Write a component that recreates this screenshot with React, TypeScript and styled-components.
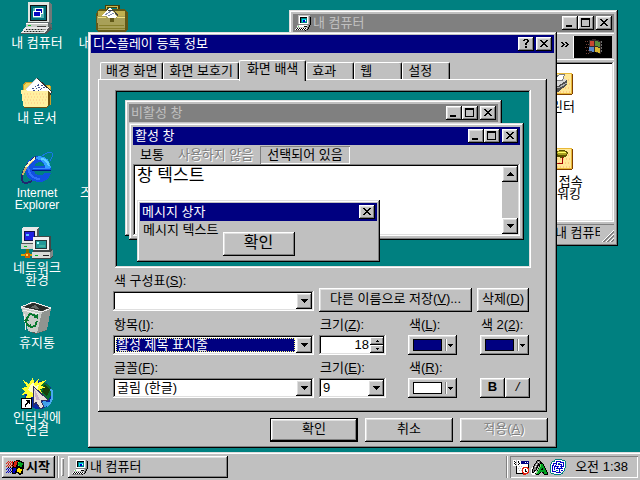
import React from "react";
import styled, { createGlobalStyle, css } from "styled-components";

const FACE = "#c0c0c0";
const NAVY = "#000080";
const TEAL = "#008080";
const GRAY = "#808080";
const LIGHT = "#dfdfdf";

const GlobalStyle = createGlobalStyle`
  *, *::before, *::after { box-sizing: border-box; }
  html, body { margin: 0; height: 100%; overflow: hidden; }
  body, button, input, select {
    font: 13px/14px "Liberation Sans", "Noto Sans CJK KR", sans-serif;
    color: #000;
  }
  svg { display: block; flex: none; shape-rendering: crispEdges; }
`;

const raised = css`
  box-shadow: inset -1px -1px #000, inset 1px 1px #fff,
    inset -2px -2px ${GRAY}, inset 2px 2px ${LIGHT};
`;
const frame = css`
  box-shadow: inset -1px -1px #000, inset 1px 1px ${LIGHT},
    inset -2px -2px ${GRAY}, inset 2px 2px #fff;
`;
const sunken = css`
  box-shadow: inset -1px -1px #fff, inset 1px 1px ${GRAY},
    inset -2px -2px ${LIGHT}, inset 2px 2px #000;
`;

/* ---------- Drawings ---------- */

const PALETTE: Record<string, string> = {
  k: "#000", w: "#fff", g: GRAY, s: FACE, b: "#0000c8", n: NAVY, r: "#e02010",
  t: TEAL, c: "#00d8f0", y: "#ffe000", e: "#00a020", l: "#60e060", d: "#404040",
};

function Pixels({ rows }: { rows: string[] }) {
  const w = Math.max(...rows.map((r) => r.length));
  return (
    <svg width={w} height={rows.length} viewBox={`0 0 ${w} ${rows.length}`} aria-hidden="true">
      {rows.flatMap((row, y) =>
        [...row].map((ch, x) =>
          PALETTE[ch] ? <rect key={`${x}-${y}`} x={x} y={y} width="1" height="1" fill={PALETTE[ch]} /> : null,
        ),
      )}
    </svg>
  );
}

const GLYPHS = {
  min: ["        ", "        ", "        ", "        ", "        ", "        ", "        ", "kkkkkk  ", "kkkkkk  "],
  max: ["kkkkkkkkk", "kkkkkkkkk", "k       k", "k       k", "k       k", "k       k", "k       k", "k       k", "kkkkkkkkk"],
  close: ["kk    kk", " kk  kk ", "  kkkk  ", "   kk   ", "  kkkk  ", " kk  kk ", "kk    kk", "        "],
  help: [" kkkk ", "kk  kk", "    kk", "   kk ", "  kk  ", "  kk  ", "      ", "  kk  ", "  kk  "],
  down: ["kkkkkkk", " kkkkk ", "  kkk  ", "   k   "],
  up: ["   k   ", "  kkk  ", " kkkkk ", "kkkkkkk"],
  downSmall: ["kkkkk", " kkk ", "  k  "],
  downTiny: ["kkk", " k "],
  upTiny: [" k ", "kkk"],
  more: ["kk  kk  ", " kk  kk ", "  kk  kk", " kk  kk ", "kk  kk  "],
};

const PC_SMALL = [
  "   ssssssssssss ",
  "   swwwwwwwwwsg ",
  "   swkkkkkkkwsgk",
  "   swkttttttwsgk",
  "   swktcccctwsgk",
  "   swktcbbwtwsgk",
  "   swktcbbctwsgk",
  "   swkttttttwsgk",
  "   swwwwwwwwwsgk",
  "    gggggggggggk",
  "  sswwwwwwwwsgk ",
  "  wlwwwwwkkksgk ",
  "  ssssssssssgk  ",
  " wkwkwkwkwkwgk  ",
  "wkwkwkwkwkwgk   ",
  "ggggggggggk     ",
];

const FLAG = [
  "          kkkk    ",
  "  r r r krrrkkkk  ",
  " r r rrkrrrkleekkk",
  "r r r rkrrrkeeeeek",
  "  r r rkrrrkeeeeek",
  " r r rkrrrkkleeekk",
  "r r r rkrrkkkkeekk",
  "  k k kkkkkkkkkkkk",
  " b b bkbbbkkyykkkk",
  "b b b kbbbkyyyyyk ",
  "  b b kbbbkyyyyyk ",
  " b b kbbbkkyyyykk ",
  "b b b kbbkkkkyykk ",
  "      kkkk  kkkkk ",
  "             kk   ",
];

const TRAY_CALENDAR = [
  "www www         ",
  "wkw wkwwnnnnnnnn",
  "wwk wkwwnnnnwnwn",
  "wkw wwkwnnnnnnnn",
  "wwk wkwwwwwwwwwk",
  "www wwwwwwwwwwwk",
  "   kwwswswwwwwwk",
  "   kwwwwwwrrrrrk",
  "   kwswswrrwwwrr",
  "   kwwwwwrwwkwwr",
  "   kwwswsrwwkwwr",
  "   kwwwwwrwwkkwr",
  "   kwwwwwrrwwwrr",
  "   kkkkkkkrrrrr ",
  "          rrr   ",
];
const TRAY_A = [
  "      kkk        ",
  "     kgggk       ",
  "     kgwgkk      ",
  "    kggkgkkk     ",
  "   kgwgkkleek    ",
  "   kggkkkleek    ",
  "  kgwgk kleeek   ",
  " wkggkk leeeek   ",
  "wwkggk kleekeek  ",
  "wkgggk leekkeek  ",
  "wkgkk kleeeeeeek ",
  "wkgkw leeeeeeeek ",
  "wkkww leek kkeeek",
  "wwwwkleek   keeek",
  " www kkk     kkkk",
];
const TRAY_NET = [
  "     ttttttt    ",
  "    twwwwwwwttt ",
  "  tttwbbbbbwwwwt",
  " twwwwbwwwbbbbwt",
  " twbbbbwttwwwbwt",
  "twwbwwbwbbbbwbwt",
  "twbbwbwwwwwbwbwt",
  "twbwbbbbbwbbbbwt",
  "twbwbwwbwwwbwwwt",
  "twbwbwbbbbbbbwt ",
  "twbwbwwwwbwwwwt ",
  "twbwwwttwbwbbwt ",
  "twbbbbwwwbwwwt  ",
  "twwwwwbbbbbwt   ",
  " tttwwwwwwwtt   ",
  "    ttttttt     ",
];

function ComputerIcon() {
  return (
    <svg width="32" height="32" viewBox="0 0 32 32" aria-hidden="true">
      <path d="M8 0h20l3 2v19l-3 2H7z" fill="#707878" />
      <path d="M7 0h20l1 1v20H7z" fill="#e0e4e0" />
      <path d="M9 3h17v16H9z" fill="#101010" />
      <path d="M10 4h15v14H10z" fill="#006e78" />
      <path d="M12 6h11v10H12z" fill="#58b4b4" />
      <path d="M14 6h8v6h-8z" fill="#fff" /><path d="M15 7h6v4h-6z" fill="#0000b0" />
      <path d="M12 9h8v6h-8z" fill="#fff" /><path d="M13 10h6v4h-6z" fill="#0808c0" />
      <path d="M6 20h22l3 2v6H6z" fill="#606868" />
      <path d="M5 21h22v6H5z" fill="#c8ccc8" />
      <path d="M5 21h22v1H5z" fill="#fff" />
      <path d="M7 23h3v1H7z" fill="#00c020" /><path d="M16 24h9v1h-9z" fill="#404040" />
      <path d="M4 25h24l3 1-5 6H0z" fill="#505858" />
      <path d="M4 25h24l-4 6H0z" fill="#e8e8e8" />
      <path d="M5 27h20v1H5zM3 29h20v1H3z" fill="#909890" />
      <path d="M5 27h1v1H5zM8 27h1v1H8zM11 27h1v1h-1zM14 27h1v1h-1zM17 27h1v1h-1zM20 27h1v1h-1zM3 29h1v1H3zM6 29h1v1H6zM9 29h1v1H9zM12 29h1v1h-1zM15 29h1v1h-1zM18 29h1v1h-1z" fill="#202020" />
    </svg>
  );
}

function DocumentsIcon() {
  return (
    <svg width="32" height="32" viewBox="0 0 32 32" aria-hidden="true">
      <path d="M2 8l2-3h8l2 3h14l2 2v18H2z" fill="#c8a028" />
      <path d="M3 8l2-2h6l2 3h16v8H3z" fill="#f0d860" />
      <path d="M16 1L31 15 20 28 5 12z" fill="#fff" />
      <path d="M16 1L31 15l-3 4" fill="none" stroke="#303030" />
      <path d="M16 1L5 12" stroke="#d0d0d0" fill="none" />
      <path d="M11 12l8-5M12 14l10-6M14 15l10-5" stroke="#405090" strokeDasharray="2 1" />
      <path d="M0 13h5l2 1h20v15l-2 1H3l-1-2z" fill="#fff0a0" />
      <path d="M3 17h22M4 20h22M3 23h22M4 26h20" stroke="#ffd890" strokeDasharray="1 2" strokeWidth="2" />
      <path d="M27 14l2 2v12l-4 3H3v-1h22l2-2z" fill="#705010" />
    </svg>
  );
}

function ExplorerIcon() {
  return (
    <svg width="32" height="32" viewBox="0 0 32 32" aria-hidden="true">
      <path d="M17 4c8 0 13 5 13 14H13c0 4 3 5 6 5 3 0 4-1 5-2h6c-2 6-6 9-12 9-8 0-14-5-14-12S9 4 17 4z" fill="#1050e0" />
      <path d="M15 5c8-3 14 2 15 11h-6c0-5-3-8-9-9z" fill="#30a0ff" />
      <path d="M20 7c4 0 7 3 8 7" fill="none" stroke="#60d0ff" strokeWidth="2" />
      <path d="M14 14h9c0-3-2-4-4-4s-5 1-5 4z" fill={TEAL} />
      <path d="M11 18h19v1H11z" fill="#001880" />
      <path d="M12 16h17v1H12z" fill="#3888ff" />
      <path d="M7 14c0 7 4 13 12 13" fill="none" stroke="#3070f8" strokeWidth="2" />
      <path d="M20 5c5-5 10-5 11-4 1 2 0 5-2 8" fill="none" stroke="#1878e8" strokeWidth="1" />
      <path d="M15 5C6 10-2 24 2 30c2 2 5 1 9-1" fill="none" stroke="#202870" strokeWidth="2" />
      <path d="M13 7C7 12 3 17 2 23" fill="none" stroke="#c8b068" strokeWidth="2" />
      <path d="M14 6c-4 3-7 6-9 9" fill="none" stroke="#fff8c0" strokeWidth="2" />
    </svg>
  );
}

function NetworkIcon() {
  return (
    <svg width="32" height="32" viewBox="0 0 32 32" aria-hidden="true">
      <path d="M1 1h17v21H0v-6h1z" fill="#505858" />
      <path d="M1 1l2-1h15l-2 2v14H1z" fill="#e8e8e8" />
      <path d="M3 4h11v10H3z" fill="#101048" /><path d="M4 5h9v8H4z" fill="#2020e0" />
      <path d="M5 7h3v2H5z" fill="#60c0ff" />
      <path d="M0 17h16v5H0z" fill="#d0d4d0" /><path d="M3 19h3v1H3z" fill="#00c020" />
      <path d="M5 22h3v5H5z" fill="#807000" /><path d="M0 28h12" stroke="#e0a000" strokeWidth="2" />
      <path d="M4 26h5v5H4z" fill="#d06000" /><path d="M5 27h2v2H5z" fill="#ffe040" />
      <path d="M12 10l3-1h15v13l2 2v6l-3 2H11v-7h1z" fill="#404848" />
      <path d="M12 10h16v13H12z" fill="#f0f0f0" />
      <path d="M14 13h12v9H14z" fill="#203838" /><path d="M15 14h10v7H15z" fill="#209898" />
      <path d="M16 15h2v2h-2z" fill="#a0ffff" /><path d="M18 18h6v2h-6z" fill="#40b0a0" />
      <path d="M11 25h18v6H11z" fill="#d8dcd8" /><path d="M14 28h3v1h-3z" fill="#00b020" />
      <path d="M22 28h6v1h-6z" fill="#202020" />
      <path d="M29 25l3-2v6l-3 2z" fill="#808888" />
    </svg>
  );
}

function RecycleIcon() {
  return (
    <svg width="32" height="32" viewBox="0 0 32 32" aria-hidden="true">
      <path d="M0 5l12-5 18 6-4 22-11 4-8-3z" fill="#585c58" />
      <path d="M0 5l21 5-5 21-9-2z" fill="#c8ccc8" />
      <path d="M21 10l9-4-4 22-10 3z" fill="#909490" />
      <path d="M3 5l9-4 16 5-7 3z" fill="#282c28" />
      <path d="M9 6l5-3 4 4z" fill="#686c68" />
      <path d="M0 5l12-5 18 6-9 4z" fill="none" stroke="#f0f0f0" />
      <path d="M2 8l16 4M5 28L3 12" fill="none" stroke="#f0f0f0" />
      <path d="M6 16l3-4 4 1 2 3M5 18l1 5 3 1M16 19l-2 5-4 1" fill="none" stroke="#087830" strokeWidth="2" />
      <path d="M12 15l5 2 0-5zM3 19l3-4 2 4zM10 22v5l-3-3z" fill="#087830" />
    </svg>
  );
}

function ConnectIcon() {
  return (
    <svg width="32" height="32" viewBox="0 0 32 32" aria-hidden="true">
      <circle cx="18" cy="18" r="14" fill="#0828a8" />
      <path d="M20 4c7 2 11 6 11 12l-4 8-5-5-3-6z" fill="#087030" />
      <path d="M24 7l5 6-3 6-5-4z" fill="#18400c" />
      <path d="M30 12c3 6 1 13-4 17" fill="none" stroke="#48a8f0" strokeWidth="2" />
      <path d="M22 24l6 1-3 5-6 1z" fill="#40a0e8" />
      <path d="M12 0l1 6 5-5-1 5 8-3-6 6 6 1-6 2 3 6-6-2-1 8-4-5-7 7 2-9-6 1 4-4-4-3 6-1-4-7 6 4z" fill="#ffff30" />
      <path d="M12 5l2 4 4-1-2 5-4 3-5-3 2-4z" fill="#ffffc8" />
      <path d="M12 9l15 14-7 1 3 6-4 2-4-7-3 5z" fill="#e8e0d8" stroke="#303060" />
      <path d="M13 11l2 12 4 0z" fill="#c8b0c8" />
      <path d="M0 21h11v11H0z" fill="#000" /><path d="M1 22h9v9H1z" fill="#fff" />
      <path d="M4 23h5v5l-2-2-2 2v2H4v-3l2-2z" fill="#000" />
    </svg>
  );
}

function BriefcaseIcon() {
  return (
    <svg width="32" height="32" viewBox="0 0 32 32" aria-hidden="true">
      <path d="M10 8V4h12v4" fill="none" stroke="#484008" strokeWidth="3" />
      <path d="M10 7V4h11v3" fill="none" stroke="#c8b850" />
      <path d="M1 9l3-2h25l3 4v17l-3 2H2l-2-3V13z" fill="#605818" />
      <path d="M2 9h27v7H2z" fill="#c0b050" />
      <path d="M4 16L14 5l8 11z" fill="#fff" /><path d="M12 9l5-1 7 8" fill="none" stroke="#404040" />
      <path d="M9 13l6-4M12 14l6-3" stroke="#8090b0" />
      <path d="M1 14h9l3 2h6l2-2h8v14H2z" fill="#a8a058" />
      <path d="M2 15h8M21 15h8" stroke="#f0e080" />
      <path d="M14 16h4v4h-4z" fill="#605818" />
      <path d="M3 23h25M2 26h27" stroke="#88802c" />
    </svg>
  );
}

function FolderBase({ children }: { children: React.ReactNode }) {
  return (
    <svg width="32" height="32" viewBox="0 0 32 32" aria-hidden="true">
      <path d="M1 7l3-3h9l2 3h15l2 2v19l-2 1H2z" fill="#804000" />
      <path d="M1 7l3-2h8l2 2h16v20H1z" fill="#ffe898" />
      <path d="M3 14h26M4 18h25M3 22h26M4 26h25" stroke="#ffc880" strokeDasharray="1 2" strokeWidth="2" />
      <path d="M15 7h15v20H1" fill="none" stroke="#e8b838" />
      {children}
    </svg>
  );
}

function PrintersIcon() {
  return (
    <FolderBase>
      <path d="M8 15l8-5 10 4v5l-9 7-9-5z" fill="#505050" />
      <path d="M8 15l8-5 10 4-9 6z" fill="#d8d8d8" />
      <path d="M12 14l7-6h5l-3 7z" fill="#fff" stroke="#808080" />
      <path d="M8 17l9 5 9-5" fill="none" stroke="#b0b0b0" />
    </FolderBase>
  );
}

function DialUpIcon() {
  return (
    <FolderBase>
      <path d="M14 12c2-4 12-4 13 0l-2 4-4 1-5-1z" fill="#585000" />
      <path d="M15 12c2-3 10-3 11 0l-2 2h-7z" fill="#a8a020" />
      <path d="M17 12c2-1 6-1 8 0" fill="none" stroke="#ffff60" />
      <path d="M21 16v6h-7" fill="none" stroke="#a00000" />
      <path d="M3 21h13v3H3" fill="none" stroke="#c02010" strokeDasharray="1 1" />
    </FolderBase>
  );
}

function Throbber() {
  return (
    <svg width="38" height="22" viewBox="0 0 38 22" aria-hidden="true">
      <path d="M0 0h38v22H0z" fill="#000" />
      <path d="M11 5h5M12 8h4M11 11h4M12 14h4M12 17h3" stroke="#704038" strokeDasharray="1 1" />
      <path d="M15 4l5-1 7 2v13l-7-2-5 1z" fill="#302828" />
      <path d="M16 5h4v5h-4z" fill="#c84830" /><path d="M21 5l5 1v5l-5-1z" fill="#58903c" />
      <path d="M15 11h5v5l-5-1z" fill="#5888c8" /><path d="M21 11l5 1v5l-5-1z" fill="#d8b830" />
      <path d="M27 5v12" stroke="#707070" strokeDasharray="2 1" />
    </svg>
  );
}

function Grip() {
  return (
    <svg width="12" height="12" viewBox="0 0 12 12" aria-hidden="true">
      <path d="M0 12L12 0M4 12l8-8M8 12l4-4" stroke="#fff" />
      <path d="M1 12L12 1M2 12L12 2M5 12l7-7M6 12l6-6M9 12l3-3M10 12l2-2" stroke={GRAY} />
    </svg>
  );
}

/* ---------- Window parts ---------- */

const Win = styled.section<{ $pad: number }>`
  display: flex;
  flex-direction: column;
  padding: ${(p) => p.$pad}px;
  background: ${FACE};
  ${frame}
`;

const TitleRow = styled.header<{ $active?: boolean }>`
  display: flex;
  align-items: center;
  flex: none;
  height: 18px;
  padding: 0 2px;
  gap: 2px;
  white-space: nowrap;
  background: ${(p) => (p.$active ? NAVY : GRAY)};
  color: ${(p) => (p.$active ? "#fff" : FACE)};
`;

const TitleText = styled.h2`
  flex: 1;
  margin: 0;
  font: inherit;
`;

const CaptionGroup = styled.span`
  display: flex;
`;

const CaptionButton = styled.button`
  display: flex;
  align-items: center;
  justify-content: center;
  width: 16px;
  height: 14px;
  padding: 0 1px 1px 0;
  border: 0;
  background: ${FACE};
  ${raised}
`;

function Caption({ title, active, icon, kind }: {
  title: string; active?: boolean; icon?: React.ReactNode; kind: "full" | "help" | "close";
}) {
  return (
    <TitleRow $active={active}>
      {icon}
      <TitleText>{title}</TitleText>
      {kind === "full" && (
        <CaptionGroup>
          <CaptionButton type="button" aria-label="최소화"><Pixels rows={GLYPHS.min} /></CaptionButton>
          <CaptionButton type="button" aria-label="최대화"><Pixels rows={GLYPHS.max} /></CaptionButton>
        </CaptionGroup>
      )}
      {kind === "help" && <CaptionButton type="button" aria-label="도움말"><Pixels rows={GLYPHS.help} /></CaptionButton>}
      <CaptionButton type="button" aria-label="닫기"><Pixels rows={GLYPHS.close} /></CaptionButton>
    </TitleRow>
  );
}

/* ---------- Desktop ---------- */

const Screen = styled.div`
  display: flex;
  flex-direction: column;
  height: 100vh;
  background: ${TEAL};
  overflow: hidden;
`;

const Desktop = styled.main`
  position: relative;
  flex: 1;
  min-height: 0;
`;

const IconGrid = styled.div`
  display: grid;
  grid-auto-flow: column;
  grid-template-rows: repeat(6, 75px);
  grid-auto-columns: 74px;
  column-gap: 1px;
  justify-content: start;
  padding-top: 2px;
`;

const IconCell = styled.a<{ $dark?: boolean }>`
  display: flex;
  flex-direction: column;
  align-items: center;
  gap: 3px;
  width: 74px;
  height: 75px;
  color: ${(p) => (p.$dark ? "#000" : "#fff")};
  font-size: 13px;
  line-height: 12px;
  text-align: center;
  text-decoration: none;
  white-space: pre-line;
`;

const LatinLabel = styled.span`
  font-size: 12px;
`;

const EdgeLabel = styled.span`
  width: 64px;
  padding-top: 35px;
  text-align: left;
`;

const ComputerWindow = styled(Win)`
  position: absolute;
  left: 289px;
  top: 10px;
  width: 329px;
`;

const ToolBar = styled.div`
  display: flex;
  align-items: center;
  justify-content: flex-end;
  height: 27px;
  margin: 1px 0 2px;
  padding-right: 2px;
  border-top: 1px solid #fff;
  border-bottom: 1px solid #fff;
`;

const MoreButton = styled.button`
  display: flex;
  padding: 0 4px 5px;
  border: 0;
  background: none;
`;

const LogoCell = styled.span`
  border-left: 1px solid #fff;
`;

const FilePane = styled.div`
  display: flex;
  flex-direction: column;
  align-items: flex-end;
  height: 160px;
  padding: 4px 20px 0 2px;
  background: #fff;
  ${sunken}
`;

const StatusBar = styled.div`
  display: flex;
  justify-content: flex-end;
  align-items: flex-end;
  height: 20px;
  padding-top: 2px;
`;

const StatusCell = styled.span`
  align-self: stretch;
  width: 46px;
  padding-left: 1px;
  overflow: hidden;
  white-space: nowrap;
  line-height: 16px;
  border-top: 1px solid ${GRAY};
`;

const GripCell = styled.span`
  display: flex;
  align-items: flex-end;
  justify-content: flex-end;
  align-self: stretch;
  width: 14px;
  border-top: 1px solid ${GRAY};
`;

/* ---------- Display properties ---------- */

const Dialog = styled(Win)`
  position: absolute;
  left: 88px;
  top: 32px;
  width: 469px;
`;

const DialogBody = styled.form`
  padding: 7px 6px 3px 7px;
`;

const TabList = styled.div`
  display: flex;
  align-items: flex-end;
  padding-left: 2px;
`;

const Tab = styled.button<{ $selected?: boolean }>`
  position: relative;
  height: ${(p) => (p.$selected ? 21 : 17)}px;
  min-width: 48px;
  margin-bottom: ${(p) => (p.$selected ? -2 : 0)}px;
  padding: 0 ${(p) => (p.$selected ? 7 : 5)}px ${(p) => (p.$selected ? 4 : 0)}px;
  z-index: ${(p) => (p.$selected ? 1 : 0)};
  border: 1px solid #fff;
  border-right-color: #000;
  border-bottom: 0;
  border-radius: 2px 2px 0 0;
  background: ${FACE};
  box-shadow: inset -1px 0 ${GRAY};
  text-align: left;
  white-space: nowrap;
`;

const TabPanel = styled.div`
  margin-right: 1px;
  padding: 11px 14px 14px 15px;
  box-shadow: inset -1px -1px #000, inset 1px 1px #fff, inset -2px -2px ${GRAY};
`;

const Preview = styled.div`
  position: relative;
  height: 178px;
  margin: 0 2px;
  background: ${TEAL};
  ${sunken}
`;

const InactiveSample = styled(Win)`
  position: absolute;
  left: 10px;
  top: 10px;
  width: 377px;
  height: 136px;
`;

const ActiveSample = styled(Win)`
  position: absolute;
  left: 14px;
  top: 33px;
  width: 395px;
`;

const MessageSample = styled(Win)`
  position: absolute;
  left: 22px;
  top: 110px;
  width: 243px;
  height: 62px;
`;

const MenuRow = styled.div`
  display: flex;
  align-items: center;
  height: 19px;
  white-space: nowrap;
`;

const MenuItem = styled.button<{ $off?: boolean; $on?: boolean }>`
  height: 18px;
  padding: 0 7px;
  border: 0;
  background: none;
  color: ${(p) => (p.$off ? GRAY : "#000")};
  text-shadow: ${(p) => (p.$off ? "1px 1px #fff" : "none")};
  box-shadow: ${(p) => (p.$on ? `inset 1px 1px ${GRAY}, inset -1px -1px #fff` : "none")};
`;

const TextPane = styled.div`
  display: flex;
  justify-content: space-between;
  height: 72px;
  padding: 2px;
  background: #fff;
  ${sunken}
`;

const PaneText = styled.p`
  margin: 0;
  padding: 0 2px;
  font-size: 17px;
  line-height: 20px;
`;

const ScrollBar = styled.div`
  display: flex;
  flex-direction: column;
  justify-content: space-between;
  width: 16px;
  background: ${FACE};
`;

const ArrowButton = styled.button`
  display: flex;
  align-items: center;
  justify-content: center;
  width: 16px;
  height: 16px;
  padding: 0;
  border: 0;
  background: ${FACE};
  ${raised}
`;

const MessageText = styled.p`
  margin: 0;
  padding: 0 3px;
  line-height: 17px;
`;

const PushButton = styled.button<{ $default?: boolean; $pad?: number }>`
  height: 24px;
  padding: 0 ${(p) => p.$pad ?? 8}px 2px;
  border: ${(p) => (p.$default ? "1px solid #000" : "0")};
  background: ${FACE};
  white-space: nowrap;
  ${raised}

  &:disabled { color: ${GRAY}; text-shadow: 1px 1px #fff; }
`;

const SampleButton = styled(PushButton)`
  align-self: center;
  width: 72px;
  margin-top: -6px;
  font-size: 16px;
`;

const FormRow = styled.div`
  display: flex;
  align-items: flex-end;
  height: 37px;
  margin-top: 6px;
`;

const SchemeRow = styled(FormRow)`
  height: 38px;
  gap: 5px;
`;

const Field = styled.div<{ $w: number; $gap?: number }>`
  display: flex;
  flex-direction: column;
  align-self: flex-start;
  gap: 3px;
  width: ${(p) => p.$w}px;
  margin-right: ${(p) => p.$gap ?? 0}px;
`;

const Label = styled.label`
  height: 14px;
  padding-left: 1px;
  white-space: nowrap;
`;

const ComboBox = styled.div<{ $focus?: boolean }>`
  display: grid;
  grid-template-columns: 1fr 16px;
  height: 20px;
  padding: 2px;
  background: #fff;
  ${sunken}

  &::before {
    content: "";
    grid-area: 1 / 1;
    margin: 1px;
    z-index: 1;
    pointer-events: none;
    border: ${(p) => (p.$focus ? "1px dotted #ffff80" : "0")};
  }
`;

const Select = styled.select<{ $focus?: boolean }>`
  grid-area: 1 / 1 / 2 / 3;
  appearance: none;
  height: 16px;
  padding: 0 1px;
  border: 1px solid transparent;
  border-right-width: 17px;
  border-radius: 0;
  outline: 0;
  background: ${(p) => (p.$focus ? NAVY : "transparent")};
  background-clip: padding-box;
  color: ${(p) => (p.$focus ? "#fff" : "#000")};
`;

const ComboArrow = styled.span`
  grid-area: 1 / 2;
  display: flex;
  align-items: center;
  justify-content: center;
  background: ${FACE};
  pointer-events: none;
  ${raised}
`;

function Combo({ id, value, focus }: { id: string; value: string; focus?: boolean }) {
  return (
    <ComboBox $focus={focus}>
      <Select id={id} $focus={focus} defaultValue={value}>
        <option value={value}>{value}</option>
      </Select>
      <ComboArrow><Pixels rows={GLYPHS.down} /></ComboArrow>
    </ComboBox>
  );
}

const Spinner = styled.div`
  display: flex;
  height: 20px;
  padding: 2px;
  background: #fff;
  ${sunken}
`;

const SpinInput = styled.input`
  flex: 1;
  min-width: 0;
  padding: 0 1px;
  border: 0;
  outline: 0;
  background: transparent;
  text-align: right;
`;

const SpinButtons = styled.div`
  display: grid;
  grid-template-rows: 1fr 1fr;
  width: 14px;
`;

const SpinButton = styled.button`
  display: flex;
  align-items: center;
  justify-content: center;
  padding: 0;
  border: 0;
  background: ${FACE};
  box-shadow: inset -1px -1px #000, inset 1px 1px #fff, inset -2px -2px ${GRAY};
`;

const ColorButton = styled.button`
  display: flex;
  align-items: center;
  height: 20px;
  width: 49px;
  padding: 0 4px 0 5px;
  gap: 3px;
  border: 0;
  background: ${FACE};
  ${raised}
`;

const Swatch = styled.span<{ $color: string }>`
  width: 29px;
  height: 12px;
  border: 1px solid #000;
  background: ${(p) => p.$color};
`;

const SwatchArrow = styled.span`
  display: flex;
  align-items: center;
  height: 12px;
  padding-left: 2px;
  border-left: 1px solid ${GRAY};
  box-shadow: inset 1px 0 #fff;
`;

function ColorField({ id, label, color, gap }: { id: string; label: React.ReactNode; color: string; gap?: number }) {
  return (
    <Field $w={49} $gap={gap}>
      <Label htmlFor={id}>{label}</Label>
      <ColorButton id={id} type="button">
        <Swatch $color={color} />
        <SwatchArrow><Pixels rows={GLYPHS.downSmall} /></SwatchArrow>
      </ColorButton>
    </Field>
  );
}

const StyleButton = styled(PushButton)<{ $bold?: boolean }>`
  width: 25px;
  height: 20px;
  padding: 0 0 2px;
  font-weight: ${(p) => (p.$bold ? 700 : 400)};
  font-style: ${(p) => (p.$bold ? "normal" : "italic")};
`;

const ButtonRow = styled.div`
  display: flex;
  justify-content: flex-end;
  gap: 7px;
  padding-top: 6px;
`;

const DialogButton = styled(PushButton)`
  width: 88px;
`;

/* ---------- Task bar ---------- */

const TaskBar = styled.footer`
  display: flex;
  align-items: stretch;
  flex: none;
  height: 28px;
  padding: 4px 2px 2px;
  background: ${FACE};
  box-shadow: inset 0 1px ${LIGHT}, inset 0 2px #fff;
`;

const TaskButton = styled.button<{ $start?: boolean }>`
  display: flex;
  align-items: center;
  width: ${(p) => (p.$start ? 53 : 160)}px;
  padding: 0 4px;
  gap: 2px;
  border: 0;
  background: ${FACE};
  font-weight: ${(p) => (p.$start ? 700 : 400)};
  white-space: nowrap;
  ${raised}
`;

const Etch = styled.span`
  width: 2px;
  margin-left: 2px;
  border-left: 1px solid ${GRAY};
  border-right: 1px solid #fff;
`;

const Handle = styled.span`
  width: 3px;
  margin: 2px 4px 2px 2px;
  box-shadow: inset 1px 1px #fff, inset -1px -1px ${GRAY};
`;

const Spacer = styled.span`
  flex: 1;
`;

const Tray = styled.div`
  display: flex;
  align-items: center;
  width: 128px;
  margin-left: 2px;
  padding: 0 10px 0 3px;
  gap: 2px;
  box-shadow: inset 1px 1px ${GRAY}, inset -1px -1px #fff;
`;

const Clock = styled.time`
  margin-left: auto;
  white-space: nowrap;
`;

export default function App() {
  return (
    <Screen lang="ko">
      <GlobalStyle />
      <Desktop>
        <IconGrid>
          <IconCell href="#"><ComputerIcon /><span>내 컴퓨터</span></IconCell>
          <IconCell href="#"><DocumentsIcon /><span>내 문서</span></IconCell>
          <IconCell href="#"><ExplorerIcon /><LatinLabel>{"Internet\nExplorer"}</LatinLabel></IconCell>
          <IconCell href="#"><NetworkIcon /><span>{"네트워크\n환경"}</span></IconCell>
          <IconCell href="#"><RecycleIcon /><span>휴지통</span></IconCell>
          <IconCell href="#"><ConnectIcon /><span>{"인터넷에\n연결"}</span></IconCell>
          <IconCell href="#"><BriefcaseIcon /><span>내 서류 가방</span></IconCell>
          <span />
          <IconCell href="#"><EdgeLabel>즈</EdgeLabel></IconCell>
        </IconGrid>

        <ComputerWindow $pad={4}>
          <Caption title="내 컴퓨터" kind="full" icon={<Pixels rows={PC_SMALL} />} />
          <ToolBar>
            <MoreButton type="button" aria-label="도구 더 보기"><Pixels rows={GLYPHS.more} /></MoreButton>
            <LogoCell><Throbber /></LogoCell>
          </ToolBar>
          <FilePane>
            <IconCell $dark href="#"><PrintersIcon /><span>프린터</span></IconCell>
            <IconCell $dark href="#"><DialUpIcon /><span>{"전화 접속\n네트워킹"}</span></IconCell>
          </FilePane>
          <StatusBar>
            <StatusCell>내 컴퓨터</StatusCell>
            <GripCell><Grip /></GripCell>
          </StatusBar>
        </ComputerWindow>

        <Dialog $pad={3}>
          <Caption title="디스플레이 등록 정보" active kind="help" />
          <DialogBody onSubmit={(e) => e.preventDefault()}>
            <TabList role="tablist">
              <Tab type="button" role="tab">배경 화면</Tab>
              <Tab type="button" role="tab">화면 보호기</Tab>
              <Tab type="button" role="tab" aria-selected="true" $selected>화면 배색</Tab>
              <Tab type="button" role="tab">효과</Tab>
              <Tab type="button" role="tab">웹</Tab>
              <Tab type="button" role="tab">설정</Tab>
            </TabList>
            <TabPanel role="tabpanel">
              <Preview>
                <InactiveSample $pad={4}>
                  <Caption title="비활성 창" kind="full" />
                </InactiveSample>
                <ActiveSample $pad={4}>
                  <Caption title="활성 창" active kind="full" />
                  <MenuRow>
                    <MenuItem type="button">보통</MenuItem>
                    <MenuItem type="button" $off>사용하지 않음</MenuItem>
                    <MenuItem type="button" $on>선택되어 있음</MenuItem>
                  </MenuRow>
                  <TextPane>
                    <PaneText>창 텍스트</PaneText>
                    <ScrollBar>
                      <ArrowButton type="button" aria-label="위로"><Pixels rows={GLYPHS.up} /></ArrowButton>
                      <ArrowButton type="button" aria-label="아래로"><Pixels rows={GLYPHS.down} /></ArrowButton>
                    </ScrollBar>
                  </TextPane>
                </ActiveSample>
                <MessageSample $pad={3}>
                  <Caption title="메시지 상자" active kind="close" />
                  <MessageText>메시지 텍스트</MessageText>
                  <SampleButton type="button">확인</SampleButton>
                </MessageSample>
              </Preview>

              <SchemeRow>
                <Field $w={201}>
                  <Label htmlFor="scheme">색 구성표(<u>S</u>):</Label>
                  <Combo id="scheme" value="" />
                </Field>
                <PushButton type="button" $pad={11}>다른 이름으로 저장(<u>V</u>)...</PushButton>
                <PushButton type="button" $pad={5}>삭제(<u>D</u>)</PushButton>
              </SchemeRow>

              <FormRow>
                <Field $w={201} $gap={5}>
                  <Label htmlFor="item">항목(<u>I</u>):</Label>
                  <Combo id="item" value="활성 제목 표시줄" focus />
                </Field>
                <Field $w={67} $gap={22}>
                  <Label htmlFor="item-size">크기(<u>Z</u>):</Label>
                  <Spinner>
                    <SpinInput id="item-size" defaultValue="18" />
                    <SpinButtons>
                      <SpinButton type="button" aria-label="늘리기"><Pixels rows={GLYPHS.upTiny} /></SpinButton>
                      <SpinButton type="button" aria-label="줄이기"><Pixels rows={GLYPHS.downTiny} /></SpinButton>
                    </SpinButtons>
                  </Spinner>
                </Field>
                <ColorField id="color1" gap={23} color={NAVY} label={<>색(<u>L</u>):</>} />
                <ColorField id="color2" color={NAVY} label={<>색 2(<u>2</u>):</>} />
              </FormRow>

              <FormRow>
                <Field $w={201} $gap={5}>
                  <Label htmlFor="font">글꼴(<u>F</u>):</Label>
                  <Combo id="font" value="굴림 (한글)" />
                </Field>
                <Field $w={67} $gap={22}>
                  <Label htmlFor="font-size">크기(<u>E</u>):</Label>
                  <Combo id="font-size" value="9" />
                </Field>
                <ColorField id="font-color" gap={23} color="#fff" label={<>색(<u>R</u>):</>} />
                <StyleButton type="button" $bold>B</StyleButton>
                <StyleButton type="button">/</StyleButton>
              </FormRow>
            </TabPanel>

            <ButtonRow>
              <DialogButton $default>확인</DialogButton>
              <DialogButton type="button">취소</DialogButton>
              <DialogButton type="button" disabled>적용(<u>A</u>)</DialogButton>
            </ButtonRow>
          </DialogBody>
        </Dialog>
      </Desktop>

      <TaskBar>
        <TaskButton $start><Pixels rows={FLAG} />시작</TaskButton>
        <Etch />
        <Handle />
        <TaskButton><Pixels rows={PC_SMALL} />내 컴퓨터</TaskButton>
        <Spacer />
        <Etch />
        <Tray>
          <Pixels rows={TRAY_CALENDAR} />
          <Pixels rows={TRAY_A} />
          <Pixels rows={TRAY_NET} />
          <Clock>오전 1:38</Clock>
        </Tray>
      </TaskBar>
    </Screen>
  );
}
